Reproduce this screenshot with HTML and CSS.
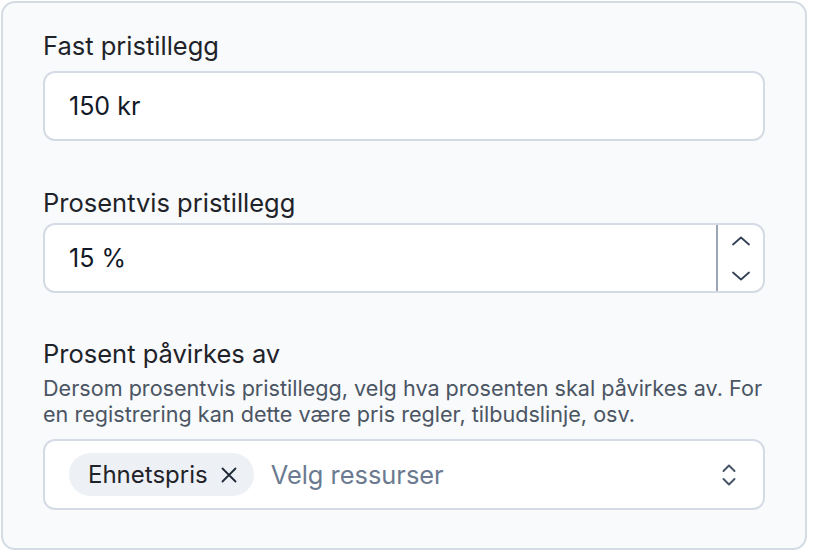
FILE: index.html
```html
<!DOCTYPE html>
<html lang="no">
<head>
<meta charset="utf-8">
<link rel="stylesheet" href="styles.css">
</head>
<body>
<div class="card">
  <div class="field field-fixed">
    <label class="label">Fast pristillegg</label>
    <div class="input"><span class="value">150 kr</span></div>
  </div>
  <div class="field field-percent">
    <label class="label">Prosentvis pristillegg</label>
    <div class="input input-number">
      <span class="value">15 %</span>
      <div class="stepper">
        <svg class="step" width="20" height="12" viewBox="0 0 20 12"><path d="M2 9.5 L10 2.5 L18 9.5" fill="none" stroke="#334155" stroke-width="1.8" stroke-linecap="round" stroke-linejoin="round"/></svg>
        <svg class="step" width="20" height="12" viewBox="0 0 20 12"><path d="M2 2.5 L10 9.5 L18 2.5" fill="none" stroke="#334155" stroke-width="1.8" stroke-linecap="round" stroke-linejoin="round"/></svg>
      </div>
    </div>
  </div>
  <div class="field field-affect">
    <label class="label">Prosent påvirkes av</label>
    <p class="desc">Dersom prosentvis pristillegg, velg hva prosenten skal påvirkes av. For en registrering kan dette være pris regler, tilbudslinje, osv.</p>
    <div class="input select">
      <span class="chip">Ehnetspris
        <svg class="chip-x" width="18" height="18" viewBox="0 0 18 18"><path d="M2.5 2.5 L15.5 15.5 M15.5 2.5 L2.5 15.5" stroke="#1f2937" stroke-width="1.8" stroke-linecap="round"/></svg>
      </span>
      <span class="placeholder">Velg ressurser</span>
      <svg class="updown" width="16" height="24" viewBox="0 0 16 24"><path d="M2.5 8 L8 2.5 L13.5 8 M2.5 16 L8 21.5 L13.5 16" fill="none" stroke="#475569" stroke-width="2" stroke-linecap="round" stroke-linejoin="round"/></svg>
    </div>
  </div>
</div>
</body>
</html>
```

FILE: styles.css
```css
* { box-sizing: border-box; }
html, body { margin: 0; padding: 0; background: #ffffff; }
body {
  font-family: Inter, "Noto Sans", sans-serif;
  color: #1f2937;
}
.card {
  margin: 1px 0 0 1px;
  width: 806px;
  height: 549px;
  border: 2px solid #d4dbe4;
  border-radius: 14px;
  background: #f8fafc;
  padding: 27px 40px 0 40px;
  display: flex;
  flex-direction: column;
}
.field { display: flex; flex-direction: column; }
.field-percent { margin-top: 46px; }
.field-affect { margin-top: 45px; }
.label {
  font-size: 25.5px;
  line-height: 32px;
  font-weight: 400;
  color: #1f2329;
  margin-bottom: 9px;
}
.field-percent .label { margin-bottom: 4px; }
.field-affect .label { margin-bottom: 5px; }
.desc {
  margin: 0 -24px 12px 0;
  font-size: 21.6px;
  line-height: 26px;
  color: #4b5563;
}
.input {
  height: 70px;
  background: #ffffff;
  border: 2px solid #d4dbe4;
  border-radius: 12px;
  display: flex;
  align-items: center;
  padding: 0 24px;
  font-size: 25px;
  color: #111827;
}
.value { flex: 1; }
.input-number { padding-right: 0; }
.stepper {
  align-self: stretch;
  width: 47px;
  border-left: 2px solid #9aa6b6;
  display: flex;
  flex-direction: column;
  align-items: center;
  justify-content: space-between;
  padding: 10px 0 9px 0;
}
.select { height: 71px; padding-left: 24px; padding-right: 26px; }
.chip {
  display: inline-flex;
  align-items: center;
  height: 43px;
  padding: 0 16px 0 19px;
  border-radius: 22px;
  background: #edf0f5;
  color: #1f2329;
  font-size: 24px;
  gap: 12px;
}
.placeholder {
  flex: 1;
  margin-left: 17px;
  color: #6b7a90;
  font-size: 25.4px;
}
.updown { display: block; }
```
